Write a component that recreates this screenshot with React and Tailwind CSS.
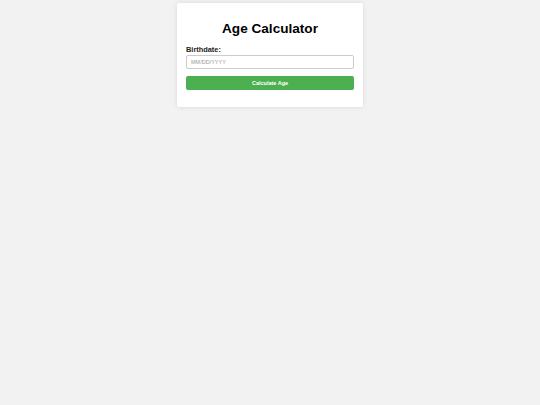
export default function App() {
  return (
    <div className="min-h-[405px] w-[540px] bg-[#f2f2f2] flex justify-center" style={{fontFamily: '"Liberation Sans", Arial, sans-serif'}}>
      <div className="mt-[3px] w-[186px] h-[104px] bg-white rounded-[2px] shadow-[0_0_5px_rgba(0,0,0,0.1)] px-[9px] pt-[17px]">
        <h1 className="text-center text-[13.6px] leading-[17px] font-bold text-black">Age Calculator</h1>
        <div className="mt-[8px] text-[7.4px] leading-[9px] font-bold text-[#222]">Birthdate:</div>
        <div className="mt-[1px] h-[14px] border border-[#ccc] rounded-[2px] flex items-center px-[4px] text-[5.5px] text-[#999]">MM/DD/YYYY</div>
        <div className="mt-[7px] h-[14px] bg-[#4caf50] rounded-[2px] flex items-center justify-center text-[5.5px] font-bold text-white">Calculate Age</div>
      </div>
    </div>
  );
}
